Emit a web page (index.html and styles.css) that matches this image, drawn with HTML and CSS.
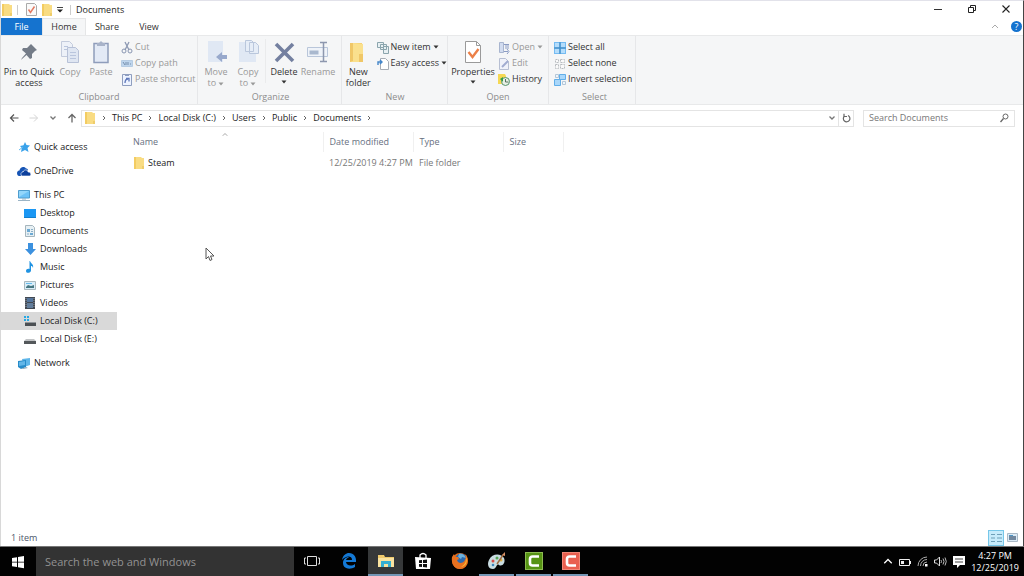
FILE: index.html
```html
<!DOCTYPE html>
<html lang="en">
<head>
<meta charset="utf-8">
<title>Documents</title>
<link rel="stylesheet" href="styles.css">
</head>
<body>
<svg class="defs" aria-hidden="true">
  <symbol id="folder" viewBox="0 0 12 14"><path d="M1 1h7l1 1h2v11H1z" fill="#f9dc83"/><path d="M1 1h2v12H1z" fill="#f3cc62"/><path d="M9 10h2v3H9z" fill="#efcd6b"/></symbol>
  <symbol id="chev" viewBox="0 0 6 8"><path d="M2 2l2 2-2 2" fill="none" stroke="#666"/></symbol>
  <symbol id="tri" viewBox="0 0 6 4"><path d="M.5.5h5L3 3.5z" fill="currentColor"/></symbol>
  <symbol id="down" viewBox="0 0 8 8"><path d="M1.500 2.500L4 5l2.500-2.500" fill="none" stroke="currentColor" stroke-width="1.300"/></symbol>
  <symbol id="up" viewBox="0 0 8 8"><path d="M1 5l3-3 3 3" fill="none" stroke="currentColor"/></symbol>
</svg>

<div class="window">
  <header class="titlebar">
    <div class="quick">
      <svg class="i14" viewBox="0 0 12 14"><use href="#folder"/></svg>
      <span class="bar"></span>
      <button class="plain check" aria-label="Properties"><svg width="11" height="13" viewBox="0 0 11 13"><path d="M.5.500h8l2 2v10H.500z" fill="#fafafa" stroke="#aaa"/><path d="M2.500 6.500l2 3 4-6" fill="none" stroke="#e47a62" stroke-width="1.500"/></svg></button>
      <button class="plain" aria-label="New folder"><svg class="i14"><use href="#folder"/></svg></button>
      <button class="plain" aria-label="Customize Quick Access Toolbar"><svg width="6" height="7" viewBox="0 0 6 7"><path d="M0 1.500h6" stroke="#444"/><path d="M0 3.500h6L3 6.500z" fill="#222"/></svg></button>
      <span class="bar last"></span>
    </div>
    <h1>Documents</h1>
    <div class="controls">
      <button class="plain" aria-label="Minimize"><svg width="10" height="10" viewBox="0 0 10 10"><path d="M1 5.500h8" stroke="#333"/></svg></button>
      <button class="plain" aria-label="Restore"><svg width="10" height="10" viewBox="0 0 10 10"><path d="M1.500 3.500h5v5h-5zM3.500 3V1.500h5v5H7" fill="none" stroke="#222"/></svg></button>
      <button class="plain" aria-label="Close"><svg width="10" height="10" viewBox="0 0 10 10"><path d="M1.500 1.500l7 7m0-7l-7 7" stroke="#222" stroke-width="1.100"/></svg></button>
    </div>
  </header>

  <nav class="tabs" aria-label="Ribbon">
    <button class="tab file">File</button>
    <button class="tab active">Home</button>
    <button class="tab">Share</button>
    <button class="tab">View</button>
    <span class="grow"></span>
    <button class="plain pale" aria-label="Collapse ribbon"><svg width="8" height="8"><use href="#up"/></svg></button>
    <button class="help" aria-label="Help">?</button>
  </nav>

  <section class="ribbon">
    <div class="group clipboard">
      <div class="tools">
        <button class="big pin"><svg width="24" height="26" viewBox="0 0 24 26"><path d="M14 5l6 6-2 1-3 3 0 4-2 1-3.500-4L5 20l-1 1 1-2 4-4.500-4-3.500 1-2h4l3-3z" fill="#747c88"/></svg><span>Pin to Quick<br>access</span></button>
        <button class="big copy off"><svg width="24" height="26" viewBox="0 0 24 26"><path d="M3.500 2.500h8l3 3v12h-11z" fill="#edf1f8" stroke="#c3cbdc"/><path d="M9.500 8.500h8l3 3v12h-11z" fill="#dfe6f2" stroke="#b7c1d7"/><path d="M12 13.500h6m-6 3h6m-6 3h6M6 7.500h4m-4 3h3" stroke="#b9c5dd"/></svg><span>Copy</span></button>
        <button class="big paste off"><svg width="24" height="26" viewBox="0 0 24 26"><path d="M5 4.500h14v19H5z" fill="#e3eaf6" stroke="#8f9dbb" stroke-width="1.500"/><path d="M8 4h2l2-2 2 2h2v3H8z" fill="#a8b3c9"/></svg><span>Paste</span></button>
        <div class="stack">
          <button class="small off"><svg width="12" height="13" viewBox="0 0 12 13"><path d="M4 1l4 8M8 1L4 9" stroke="#8c98b2" stroke-width="1.300"/><circle cx="3" cy="10" r="2" fill="none" stroke="#8996b2"/><circle cx="9" cy="10" r="2" fill="none" stroke="#8996b2"/></svg>Cut</button>
          <button class="small off"><svg width="12" height="13" viewBox="0 0 12 13"><path d="M.5 3.500h11v6H.500z" fill="#bed5ed" stroke="#b6cce3"/><path d="M2 5l2 3m1-3v3m2-3v3m2-1h1" stroke="#768fad"/></svg>Copy path</button>
          <button class="small off"><svg width="12" height="13" viewBox="0 0 12 13"><path d="M1.500 1.500h9v11h-9z" fill="#edf3ff" stroke="#8f9ebf"/><path d="M4 1h4v2H4z" fill="#8f9ebf"/><path d="M4 10c0-3 1-4 3-4M5 5.500h3v3" fill="none" stroke="#5f78bb" stroke-width="1.300"/></svg>Paste shortcut</button>
        </div>
      </div>
      <h2>Clipboard</h2>
    </div>

    <div class="group organize">
      <div class="tools">
        <button class="big off"><svg width="24" height="26" viewBox="0 0 24 26"><path d="M4 2h15v21H4z" fill="#e0e8f4"/><path d="M23 16h-5v-3l-6 5 6 5v-3h5z" fill="#98a9cc"/></svg><span>Move<br>to <svg class="t"><use href="#tri"/></svg></span></button>
        <button class="big off"><svg width="24" height="26" viewBox="0 0 24 26"><path d="M3 3h17v20H3z" fill="#e0e8f4"/><path d="M9.500 1.500h6l2 2v9h-8zM13.500 3.500h6l3 3v8h-9z" fill="#e6edf7" stroke="#bac7dc"/></svg><span>Copy<br>to <svg class="t"><use href="#tri"/></svg></span></button>
        <span class="split"></span>
        <button class="big delete"><svg width="24" height="26" viewBox="0 0 24 26"><path d="M4 5l17 17M21 5L4 22" stroke="#7480a0" stroke-width="3.600"/></svg><span>Delete<br><svg class="t"><use href="#tri"/></svg></span></button>
        <button class="big off rename"><svg width="24" height="26" viewBox="0 0 24 26"><path d="M1.500 8.500h20v9h-20z" fill="#eff3f9" stroke="#b9c6da"/><path d="M3.500 11.500h9v4h-9z" fill="#a9b8ce"/><path d="M17.500 3v20M14 3.500h7m-7 19h7" stroke="#8d97ae" stroke-width="1.500"/></svg><span>Rename</span></button>
      </div>
      <h2>Organize</h2>
    </div>

    <div class="group new">
      <div class="tools">
        <button class="big"><svg width="24" height="26" viewBox="0 0 24 26"><path d="M4 4h12v19H4z" fill="#f5cf70"/><path d="M7 4l10 1v18H4V8z" fill="#fae08d"/><path d="M4 4h3v18l-3 1zM13 15h4v8h-4z" fill="#f0c767"/></svg><span>New<br>folder</span></button>
        <div class="stack">
          <button class="small"><svg width="12" height="13" viewBox="0 0 12 13"><path d="M.5 1.500h6v5h-6zM3.500 3.500h6v5h-6zM6.500 5.500h5v7h-5z" fill="#e8f0f3" stroke="#8ba5ad"/></svg>New item <svg class="t"><use href="#tri"/></svg></button>
          <button class="small"><svg width="12" height="13" viewBox="0 0 12 13"><path d="M3.500 1.500h5l3 3v8h-8z" fill="#fff" stroke="#a7adb5"/><path d="M1 8V5h4M3 3l2 2-2 2" fill="none" stroke="#4486c9" stroke-width="1.400"/></svg>Easy access <svg class="t"><use href="#tri"/></svg></button>
        </div>
      </div>
      <h2>New</h2>
    </div>

    <div class="group open">
      <div class="tools">
        <button class="big props"><svg width="24" height="26" viewBox="0 0 24 26"><path d="M4.500 2.500h11l4 4v17h-15z" fill="#fff" stroke="#9a9a9a"/><path d="M15.500 2.500v4h4" fill="none" stroke="#9a9a9a"/><path d="M7.500 13l4 5 6-8" fill="none" stroke="#ec8048" stroke-width="2.400"/></svg><span>Properties<br><svg class="t"><use href="#tri"/></svg></span></button>
        <div class="stack">
          <button class="small off"><svg width="12" height="13" viewBox="0 0 12 13"><path d="M1.500 1.500h4v10h-4z" fill="#d2dcf0" stroke="#a8b5cf"/><path d="M6 3.500h5M8 8V4m2 4V4M6 10.500h4M9 8l2 2.500L9 13" fill="none" stroke="#8b9cc4"/></svg>Open <svg class="t"><use href="#tri"/></svg></button>
          <button class="small off"><svg width="12" height="13" viewBox="0 0 12 13"><path d="M1.500 1.500h6l3 3v8h-9z" fill="#f0f2fa" stroke="#b7bfd3"/><path d="M4 10l6-6" stroke="#a1acd0" stroke-width="2"/></svg>Edit</button>
          <button class="small"><svg width="12" height="13" viewBox="0 0 12 13"><path d="M0 1h7l1 2v8H0z" fill="#f5d854"/><circle cx="7.500" cy="8.500" r="4" fill="#e8f0e6" stroke="#57946d"/><path d="M7.500 6v3h3" fill="none" stroke="#56725e"/><path d="M2 6l3-2v5z" fill="#329b48"/></svg>History</button>
        </div>
      </div>
      <h2>Open</h2>
    </div>

    <div class="group select">
      <div class="tools">
        <div class="stack">
          <button class="small"><svg width="12" height="13" viewBox="0 0 12 13"><path d="M0 1h12v12H0z" fill="#74bbf2"/><path d="M1 2h4v4H1zm6 0h4v4H7zM1 8h4v4H1zm6 0h4v4H7z" fill="#b5ddfb"/><path d="M6 1v12M0 7h12" stroke="#3d85bb"/></svg>Select all</button>
          <button class="small"><svg width="12" height="13" viewBox="0 0 12 13"><path d="M1.500 2.500h3v3h-3zm5 0h4v3h-4zm-5 5h3v4h-3zm5 0h4v4h-4z" fill="#fafafa" stroke="#b8bcc0" stroke-dasharray="2 1"/></svg>Select none</button>
          <button class="small"><svg width="12" height="13" viewBox="0 0 12 13"><path d="M5.500 1.500h6v5h-6zM.5 6.500h6v6h-6z" fill="#a9d7fa" stroke="#61aee9"/><path d="M1.500 1.500h3v3h-3zm7 7h3v3h-3z" fill="#eef6fc" stroke="#b4c7d8"/></svg>Invert selection</button>
        </div>
      </div>
      <h2>Select</h2>
    </div>
  </section>

  <div class="location">
    <div class="history">
      <button class="plain" aria-label="Back"><svg width="10" height="10" viewBox="0 0 10 10"><path d="M9.500 5h-8M5 1.500L1.500 5 5 8.500" fill="none" stroke="#555" stroke-width="1.200"/></svg></button>
      <button class="plain" aria-label="Forward"><svg width="10" height="10" viewBox="0 0 10 10"><path d="M.5 5h8M5 1.500L8.500 5 5 8.500" fill="none" stroke="#d4d4d4"/></svg></button>
      <button class="plain mid" aria-label="Recent locations"><svg width="8" height="8"><use href="#down"/></svg></button>
      <button class="plain" aria-label="Up"><svg width="10" height="10" viewBox="0 0 10 10"><path d="M5 9.500v-8M1.500 5L5 1.500 8.500 5" fill="none" stroke="#666" stroke-width="1.300"/></svg></button>
    </div>
    <div class="address">
      <svg class="i14"><use href="#folder"/></svg>
      <svg class="c"><use href="#chev"/></svg><a href="#">This PC</a>
      <svg class="c"><use href="#chev"/></svg><a href="#">Local Disk (C:)</a>
      <svg class="c"><use href="#chev"/></svg><a href="#">Users</a>
      <svg class="c"><use href="#chev"/></svg><a href="#">Public</a>
      <svg class="c"><use href="#chev"/></svg><a href="#">Documents</a>
      <svg class="c"><use href="#chev"/></svg>
      <div class="address-end">
        <button class="plain mid" aria-label="Previous locations"><svg width="8" height="8"><use href="#down"/></svg></button>
        <button class="plain refresh" aria-label="Refresh"><svg width="9" height="10" viewBox="0 0 9 10"><path d="M6 2.500A3.300 3.300 0 1 1 2.500 3M2 .8v2.700h3" fill="none" stroke="#666" stroke-width="1.200"/></svg></button>
      </div>
    </div>
    <label class="search">
      <input type="search" aria-label="Search Documents" placeholder="Search Documents">
      <svg width="9" height="10" viewBox="0 0 9 10"><circle cx="5.500" cy="3.500" r="2.500" fill="none" stroke="#666"/><path d="M3.500 5.500L.5 9" stroke="#666" stroke-width="1.300"/></svg>
    </label>
  </div>

  <main class="content">
    <nav class="tree" aria-label="Folders">
      <ul>
        <li><a href="#"><svg viewBox="0 0 14 14"><path d="M8 2l1.500 3 3.500.5-2.500 2.500 1 4L8 10l-4 2 .8-4L3 6l3.500-.8z" fill="#3aa2ea"/><path d="M2 10l4-3" stroke="#62b9f0"/></svg>Quick access</a></li>
        <li><a href="#"><svg viewBox="0 0 14 14"><path d="M0 9c0-2 2-2.500 2.500-2.500C3 3 7 2 9 4.500c1 0 2 .5 2 2L6 7 4 12H2C1 12 0 11 0 9z" fill="#1654b5"/><path d="M4.500 12C3 9 5 8 6 8c1-3 5-2.500 5 0 3-.5 4 3.500 1.500 4z" fill="#0c3f9c" stroke="#fff" stroke-width=".6"/></svg>OneDrive</a></li>
        <li><a href="#"><svg viewBox="0 0 14 14"><path d="M1.500 2.500h11v7.500h-11z" fill="#6cc2f7" stroke="#4f9dce"/><path d="M2 3h10L2 9z" fill="#93d6fb"/><path d="M5 11h4M1 12.500h12" stroke="#9bb4c5"/></svg>This PC</a>
          <ul>
            <li><a href="#"><svg viewBox="0 0 14 14"><path d="M1 3h12v9H1z" fill="#1b97f3"/><path d="M1 11.500h12" stroke="#147fcc"/></svg>Desktop</a></li>
            <li><a href="#"><svg viewBox="0 0 14 14"><path d="M2.500 1.500h7l2 2v9h-9z" fill="#e7f0f4" stroke="#a5b5bd"/><path d="M4 5h3v3H4zm3 4h3v2H7z" fill="#6ca9d3"/><path d="M8 5.500h2m-2 2h2M4 10h2" stroke="#8aafc8"/></svg>Documents</a></li>
            <li><a href="#"><svg viewBox="0 0 14 14"><path d="M5 1h5v6h3l-5.500 6L2 7h3z" fill="#3c91df"/></svg>Downloads</a></li>
            <li><a href="#"><svg viewBox="0 0 14 14"><path d="M7 1c1 3 4 3 3 7-.5-2-1.500-2-2-2v4.500C8 13 3 14 3 11c0-2 2-2.500 3.500-2V1z" fill="#2093e2"/></svg>Music</a></li>
            <li><a href="#"><svg viewBox="0 0 14 14"><path d="M1.500 3.500h11v8h-11z" fill="#d9edf8" stroke="#a9b8bd"/><path d="M3 9l2-2 3 1 3-1v3H3z" fill="#467782"/><path d="M3 5.500h6" stroke="#66b9e9"/></svg>Pictures</a></li>
            <li><a href="#"><svg viewBox="0 0 14 14"><path d="M2 1h10v12H2z" fill="#424953"/><path d="M4 2h6v4H4z" fill="#55769d"/><path d="M4 7h6v5H4z" fill="#637e9c"/><path d="M3 2v10m8-10v10" stroke="#9099a4" stroke-dasharray="1 1"/></svg>Videos</a></li>
            <li class="current"><a href="#" aria-current="page"><svg viewBox="0 0 14 14"><path d="M1 2h2v2H1zm3 0h2v2H4zM1 5h2v2H1zm3 0h2v2H4z" fill="#25a8e4"/><path d="M3 8h9l1 1v3H2V9z" fill="#4b4f53"/><path d="M3 8.500h9" stroke="#92979b"/></svg>Local Disk (C:)</a></li>
            <li><a href="#"><svg viewBox="0 0 14 14"><path d="M3 7h8l2 2H1z" fill="#c1c3c5"/><path d="M1 9h12v3H1z" fill="#54585b"/></svg>Local Disk (E:)</a></li>
          </ul>
        </li>
        <li><a href="#"><svg viewBox="0 0 14 14"><path d="M5 3l8-1v7l-6 2z" fill="#5fb6e9"/><path d="M1 5l8-1v7l-5 2-3-2z" fill="#278bc9"/><path d="M2 6l6-1v4l-6 1z" fill="#62b6e8"/><path d="M4 13l5-2 2 1-5 1z" fill="#8da6b6"/></svg>Network</a></li>
      </ul>
    </nav>
    <section class="files">
      <table>
        <colgroup><col class="c-name"><col class="c-date"><col class="c-type"><col class="c-size"></colgroup>
        <thead><tr><th class="sorted">Name<svg class="sort"><use href="#up"/></svg></th><th>Date modified</th><th>Type</th><th>Size</th></tr></thead>
        <tbody><tr><td><a href="#"><svg class="i14"><use href="#folder"/></svg>Steam</a></td><td>12/25/2019 4:27 PM</td><td>File folder</td><td></td></tr></tbody>
      </table>
    </section>
  </main>

  <footer class="status">
    <span>1 item</span>
    <span class="grow"></span>
    <button class="view on" aria-label="Details view"><svg width="13" height="12" viewBox="0 0 13 12"><path d="M1 2.500h4m2 0h5M1 6h4m2 0h5M1 9.500h4m2 0h5" stroke="#6d9fb8"/></svg></button>
    <button class="view" aria-label="Large icons view"><svg width="11" height="9" viewBox="0 0 11 9"><path d="M.5.500h10v8H.500z" fill="#dcebf6" stroke="#aab9c6"/><path d="M2 3h7v4H2z" fill="#71879e"/><path d="M2 2.500h4" stroke="#4d94c4"/></svg></button>
  </footer>
</div>

<footer class="taskbar">
  <button class="start" aria-label="Start"><svg width="14" height="14" viewBox="0 0 14 14"><path d="M1 3l5-.8v4.500H1zm6-1l6-1v5.700H7zM1 7.600h5V12l-5-.8zm6 0h6v5.700l-6-1z" fill="#fff"/></svg></button>
  <input class="cortana" type="search" aria-label="Search the web and Windows" placeholder="Search the web and Windows">
  <div class="apps">
    <button class="app" aria-label="Task view"><svg width="16" height="12" viewBox="0 0 16 12"><path d="M3.500 1.500h9v9h-9zM2 3H.5v6H2m12-6h1.500v6H14" fill="none" stroke="#ddd"/></svg></button>
    <button class="app" aria-label="Edge"><svg width="18" height="18" viewBox="0 0 18 18"><path d="M2 8C3 3 6 1 9 1c5 0 7 4 7 7v2H6c0 3 5 5 9 2v3c-5 3-12 2-12-4 0-4 3-6 6-6-1 1-2.500 1.500-3 3h6c0-5-7-4-10 0z" fill="#1479d5"/></svg></button>
    <button class="app running selected" aria-label="File Explorer"><svg width="18" height="18" viewBox="0 0 18 18"><path d="M1 3h6l1 2h9v10H1z" fill="#efca6c"/><path d="M1 6h16v9H1z" fill="#fae3a0"/><path d="M4 15V9h10v6h-3v-3H7v3z" fill="#36afd2"/></svg></button>
    <button class="app" aria-label="Store"><svg width="18" height="18" viewBox="0 0 18 18"><path d="M6 6V3q3-3 6 0v3" fill="none" stroke="#fff" stroke-width="1.300"/><path d="M1 5l16 1-1 11H2z" fill="#fff"/><path d="M5 8.300l3-.3v3H5zm4-.4l4-.4V11H9zM5 12h3v3l-3-.3zm4 0h4v3.500L9 15z" fill="#111"/></svg></button>
    <button class="app" aria-label="Firefox"><svg width="18" height="18" viewBox="0 0 18 18"><circle cx="9" cy="9" r="8" fill="#e46b17"/><circle cx="10" cy="7" r="5.500" fill="#2c69ae"/><path d="M8 2c3-1 6 1 7 4l-4-1-1 2-3-2z" fill="#6cb2dd"/><path d="M1 5l2-3 1 3 3 0 1 2-2 1c1 4 6 4 8 0 1-2 1-4 0-6 5 4 3 15-5 15C3 17 0 11 1 5z" fill="#e87120"/><path d="M15 5c2 5 0 9-5 10 5-3 5-6 5-10z" fill="#f6bd36"/></svg></button>
    <button class="app running" aria-label="Paint"><svg width="20" height="18" viewBox="0 0 20 18"><path d="M2 8c3-7 12-7 15-2 2 5-2 9-5 7-3-2-2 4-6 4C1 17 0 12 2 8z" fill="#c9dce1"/><circle cx="6" cy="9" r="1.500" fill="#d84b45"/><circle cx="10" cy="6" r="1.500" fill="#58a65a"/><circle cx="6" cy="13" r="1.300" fill="#3c84b9"/><circle cx="14" cy="8" r="1.500" fill="#dfb346"/><path d="M10 12l6-9" stroke="#9c6b42" stroke-width="1.500"/><path d="M15 3l3-3v4z" fill="#d99065"/></svg></button>
    <button class="app running" aria-label="Camtasia"><svg width="18" height="18" viewBox="0 0 18 18"><path d="M0 0h18v18H0z" fill="#8cba50"/><path d="M1 1h16v16H1z" fill="#569314"/><path d="M14 4.500H7.500Q5 4.500 5 7v4q0 2.500 2.500 2.500H14" fill="none" stroke="#fff" stroke-width="2.600"/></svg></button>
    <button class="app running" aria-label="Camtasia Recorder"><svg width="18" height="18" viewBox="0 0 18 18"><path d="M0 0h18v18H0z" fill="#f18777"/><path d="M1 1h16v16H1z" fill="#e96050"/><path d="M14 4.500H7.500Q5 4.500 5 7v4q0 2.500 2.500 2.500H14" fill="none" stroke="#fff" stroke-width="2.600"/></svg></button>
  </div>
  <span class="grow"></span>
  <div class="tray">
    <button class="plain white" aria-label="Show hidden icons"><svg width="10" height="10" viewBox="0 0 8 8"><use href="#up"/></svg></button>
    <button class="plain" aria-label="Battery"><svg width="12" height="10" viewBox="0 0 12 10"><path d="M.5 2.500h10v6h-10z" fill="none" stroke="#eee"/><path d="M2 4h3v3H2zm9 0h1v3h-1z" fill="#eee"/></svg></button>
    <button class="plain" aria-label="Network"><svg width="11" height="11" viewBox="0 0 11 11"><path d="M1 10A9 9 0 0 1 10 1M3.500 10A6.500 6.500 0 0 1 10 3.500M6 10a4 4 0 0 1 4-4" fill="none" stroke="#aaa"/><path d="M8 8h2.500v2.500H8z" fill="#fff"/></svg></button>
    <button class="plain" aria-label="Volume"><svg width="13" height="11" viewBox="0 0 13 11"><path d="M.5 4h2l3-3v9l-3-3h-2z" fill="none" stroke="#ddd"/><path d="M7 4q1 1.500 0 3m2-4.500q2 3 0 6m2-7q2.500 4 0 8" fill="none" stroke="#bbb"/></svg></button>
    <button class="plain" aria-label="Action center"><svg width="12" height="12" viewBox="0 0 12 12"><path d="M0 0h12v9H7l-3 3V9H0z" fill="#fff"/><path d="M2 3h8M2 6h8" stroke="#444"/></svg></button>
    <time datetime="2019-12-25T16:27">4:27 PM<br>12/25/2019</time>
  </div>
</footer>

<svg class="cursor" width="10" height="15" viewBox="0 0 10 15" aria-hidden="true"><path d="M1 1v11l2.500-2.500L5 13.500l2-1L5.500 9H9z" fill="#fff" stroke="#555"/></svg>
</body>
</html>
```
FILE: styles.css
```css
* { box-sizing: border-box; }

body {
  margin: 0;
  height: 100vh;
  display: flex;
  flex-direction: column;
  background: #fff;
  color: #222;
  font: 9px/12px "Open Sans", "Noto Sans", sans-serif;
  overflow: hidden;
}

button, input {
  font: inherit;
  color: inherit;
  border: 0;
  padding: 0;
  background: none;
  border-radius: 0;
}

a { color: inherit; text-decoration: none; }
ul { list-style: none; margin: 0; padding: 0; }
h1, h2 { margin: 0; font-size: inherit; font-weight: 400; }
svg { display: block; flex: none; }
.defs { position: absolute; width: 0; height: 0; }
.grow { flex: 1; }
.i14 { width: 12px; height: 14px; }
.plain { display: grid; place-items: center; }
.pale { color: #aaa; }
.mid { color: #777; }
.white { color: #fff; }

.window {
  flex: 1;
  min-height: 0;
  display: flex;
  flex-direction: column;
  border-left: 1px solid #d8d8d8;
  border-right: 1px solid #444;
  border-top: 1px solid #e2e2ea;
}

.titlebar { display: flex; height: 17px; align-items: center; }
.quick { display: flex; align-items: center; gap: 4px; padding-right: 5px; }
.quick .bar { width: 1px; height: 10px; background: #ccc; }
.quick .last { margin-left: 3px; }
.check { margin-left: 4px; }
.controls { margin-left: auto; display: flex; gap: 24px; padding: 0 12px 2px 0; }

.tabs { display: flex; height: 17px; align-items: stretch; }
.tab { width: 42px; color: #333; }
.tab.file { width: 41px; background: #1573cf; color: #fff; }
.tab.active {
  width: 44px;
  background: #f5f6f7;
  border: 1px solid #e5e6e7;
  border-bottom: 0;
}
.help {
  width: 11px;
  height: 11px;
  margin: 3px 1px 3px 12px;
  border-radius: 50%;
  background: #1573cf;
  color: #fff;
  line-height: 11px;
}

.ribbon {
  display: flex;
  height: 70px;
  background: #f5f6f7;
  border-top: 1px solid #e8e9ea;
  border-bottom: 1px solid #e8e9ea;
}
.group {
  display: flex;
  flex-direction: column;
  border-right: 1px solid #e6e7e9;
}
.group h2 { color: #8c8c8c; text-align: center; line-height: 14px; }
.tools { display: flex; flex: 1; padding-top: 3px; align-items: flex-start; }
.clipboard { width: 197px; }
.organize { width: 144px; padding-left: 2px; }
.new { width: 106px; padding-left: 1px; }
.open { width: 101px; }
.select { width: 87px; padding-left: 5px; }

.big {
  display: flex;
  flex-direction: column;
  align-items: center;
  width: 32px;
  line-height: 11px;
  gap: 1px;
  color: #333;
  white-space: nowrap;
}
.big.pin { width: 56px; }
.big.copy { width: 26px; }
.big.paste { width: 36px; }
.big.delete { width: 34px; }
.big.props { width: 50px; }
.big svg.t { margin: 3px auto 0; }
.big.off svg.t, .small svg.t { display: inline-block; margin: 0; vertical-align: middle; }
.split { width: 1px; height: 44px; margin: 0 1px; background: #eaebec; }
.t { width: 6px; height: 4px; }
.off, .big.off { color: #999; }

.stack { display: flex; flex-direction: column; }
.small {
  display: flex;
  align-items: center;
  gap: 2px;
  height: 16px;
  color: #333;
  white-space: nowrap;
}
.small.off { color: #999; }
.new .stack { margin-left: 3px; }
.new .big { width: 34px; }
.clipboard .stack { margin-left: 2px; }
.rename { width: 34px; }

.location { display: flex; height: 27px; align-items: center; padding: 0 8px 1px 0; gap: 9px; }
.history { display: flex; gap: 10px; width: 71px; padding-left: 8px; }
.address, .search {
  display: flex;
  align-items: center;
  height: 17px;
  border: 1px solid #e4e4e4;
}
.address { flex: 1; padding-left: 2px; gap: 5px; }
.address-end { margin-left: auto; display: flex; gap: 2px; }
.c { width: 6px; height: 8px; }
.refresh { width: 15px; height: 15px; border-left: 1px solid #e4e4e4; }
.search { width: 152px; padding: 0 5px; }
.search input { flex: 1; min-width: 0; outline: 0; }
.search input::placeholder { color: #777; opacity: 1; }

.content { flex: 1; min-height: 0; display: flex; }
.tree { width: 116px; padding-top: 6px; }
.tree > ul { display: flex; flex-direction: column; gap: 6px; }
.tree a { display: flex; align-items: center; gap: 3px; height: 18px; padding-left: 16px; }
.tree ul ul a { padding-left: 22px; }
.tree svg { width: 14px; height: 14px; }
.current { background: #d9d9d9; }

.files { flex: 1; padding-left: 10px; }
table { table-layout: fixed; width: 436px; border-collapse: collapse; }
.c-name { width: 196px; }
.c-date, .c-type { width: 90px; }
.c-size { width: 60px; }
th, td { padding: 0 0 0 6px; text-align: left; font-weight: 400; white-space: nowrap; color: #777; }
th { height: 20px; color: #68707f; border-right: 1px solid #f0f0f0; }
td { height: 22px; }
.sorted { position: relative; }
.sort { position: absolute; top: 0; left: 48%; width: 8px; height: 6px; color: #888; }
td a { display: flex; align-items: center; gap: 3px; color: #222; }

.status { display: flex; align-items: center; height: 17px; padding: 0 3px 0 10px; color: #4c566a; }
.view { width: 16px; height: 16px; display: grid; place-items: center; }
.view.on { background: #c6ebfb; border: 1px solid #76c7e9; }

.taskbar { display: flex; height: 30px; background: #020202; color: #fff; border-top: 1px solid #777; }
.start { width: 36px; display: grid; place-items: center; }
.cortana { width: 258px; background: #333; padding: 0 9px; font-size: 11px; outline: 0; }
.cortana::placeholder { color: #929292; opacity: 1; }
.apps { display: flex; gap: 2px; }
.app { width: 35px; display: grid; place-items: center; border-bottom: 2px solid transparent; }
.app.running { border-bottom-color: #7396b5; }
.app.selected { background: #363839; }
.tray { display: flex; align-items: center; gap: 6px; padding-right: 5px; }
.tray time { text-align: center; }

.cursor { position: absolute; left: 205px; top: 247px; }
```
